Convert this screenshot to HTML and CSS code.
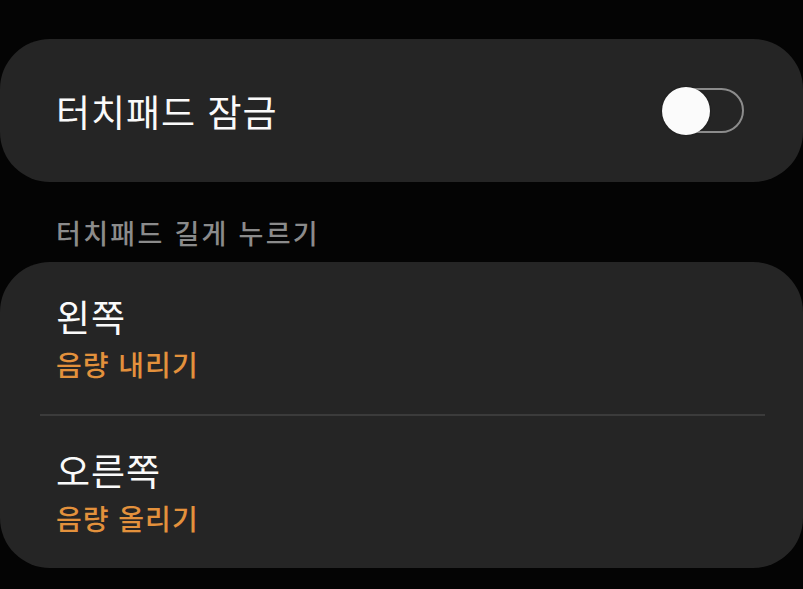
FILE: index.html
```html
<!DOCTYPE html>
<html lang="ko">
<head>
  <meta charset="UTF-8" />
  <meta name="viewport" content="width=device-width, initial-scale=1" />
  <title>터치패드</title>
  <link rel="stylesheet" href="styles.css">
</head>
<body>
  <main class="screen">
    <section class="card card-single">
      <span class="row-title">터치패드 잠금</span>
      <span class="switch" role="switch" aria-checked="false">
        <span class="switch-track"></span>
        <span class="switch-thumb"></span>
      </span>
    </section>

    <h2 class="section-label">터치패드 길게 누르기</h2>

    <section class="card card-list">
      <div class="list-row">
        <span class="row-title">왼쪽</span>
        <span class="row-value">음량 내리기</span>
      </div>
      <hr class="divider" />
      <div class="list-row">
        <span class="row-title">오른쪽</span>
        <span class="row-value">음량 올리기</span>
      </div>
    </section>
  </main>
</body>
</html>
```

FILE: styles.css
```css
:root {
  --font-ko: "Noto Sans CJK KR", "Noto Sans", sans-serif;
  --color-bg: #040404;
  --color-card: #252525;
  --color-text: #fafafa;
  --color-label: #8b8b8b;
  --color-accent: #e3913c;
  --color-divider: #3b3b3b;
  --radius-card: 50px;
}

* {
  box-sizing: border-box;
}

body {
  margin: 0;
  background-color: var(--color-bg);
  font-family: var(--font-ko);
  color: var(--color-text);
  -webkit-font-smoothing: antialiased;
}

.screen {
  padding-top: 39px;
  display: flex;
  flex-direction: column;
}

.card {
  background-color: var(--color-card);
  border-radius: var(--radius-card);
}

.card-single {
  height: 143px;
  display: flex;
  align-items: center;
  justify-content: space-between;
  padding: 0 59px 0 56px;
}

.row-title {
  font-size: 37px;
  line-height: 44px;
  font-weight: 400;
  letter-spacing: 1px;
  color: var(--color-text);
}

.switch {
  position: relative;
  width: 82px;
  height: 48px;
  display: flex;
  align-items: center;
  justify-content: flex-end;
}

.switch-track {
  width: 80px;
  height: 45px;
  border: 2px solid #8c8c8c;
  border-radius: 23px;
}

.switch-thumb {
  position: absolute;
  left: 0;
  top: 0;
  width: 48px;
  height: 48px;
  border-radius: 50%;
  background-color: #fbfbfb;
  box-shadow: 0 0 2px rgb(0 0 0 / 0.5);
}

.section-label {
  margin: 0;
  height: 80px;
  display: flex;
  align-items: center;
  padding: 20px 0 0 56px;
  font-size: 27px;
  font-weight: 500;
  letter-spacing: 2.3px;
  color: var(--color-label);
}

.card-list {
  display: flex;
  flex-direction: column;
}

.list-row {
  height: 152px;
  display: flex;
  flex-direction: column;
  justify-content: center;
  padding-left: 56px;
}

.row-value {
  font-size: 28px;
  line-height: 36px;
  margin-top: 8px;
  font-weight: 500;
  letter-spacing: 1px;
  color: var(--color-accent);
}

.divider {
  margin: 0 38px 0 40px;
  border: none;
  height: 2px;
  background-color: var(--color-divider);
}
```
